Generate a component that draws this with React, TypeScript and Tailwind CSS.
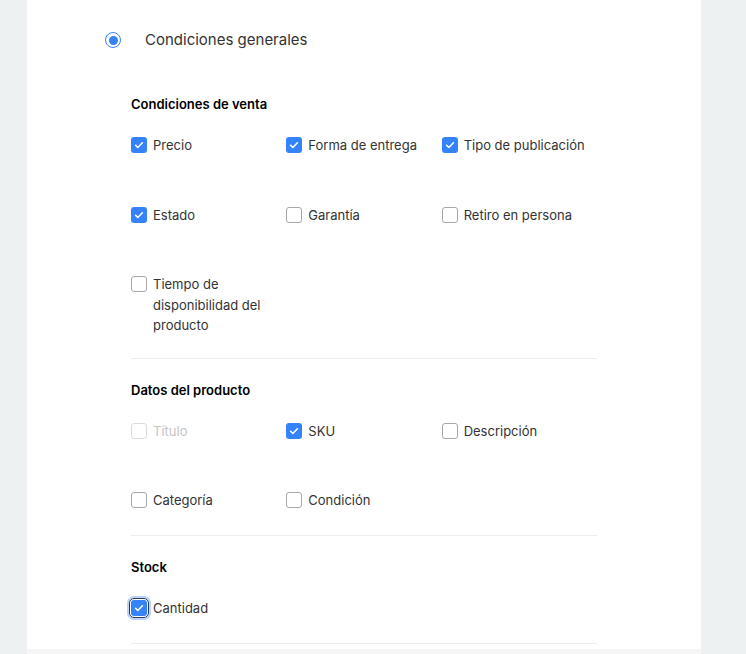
import React from "react";

type Item = { label: string; checked?: boolean; disabled?: boolean; focused?: boolean };
type Section = { title: string; sep: string; items: Item[] };

const sections: Section[] = [
  {
    title: "Condiciones de venta",
    sep: "mt-[22px] h-px bg-[#ececec]",
    items: [
      { label: "Precio", checked: true },
      { label: "Forma de entrega", checked: true },
      { label: "Tipo de publicación", checked: true },
      { label: "Estado", checked: true },
      { label: "Garantía" },
      { label: "Retiro en persona" },
      { label: "Tiempo de disponibilidad del producto" },
    ],
  },
  {
    title: "Datos del producto",
    sep: "mt-[24px] h-px bg-[#ececec]",
    items: [
      { label: "Título", disabled: true },
      { label: "SKU", checked: true },
      { label: "Descripción" },
      { label: "Categoría" },
      { label: "Condición" },
    ],
  },
  {
    title: "Stock",
    sep: "mt-[25px] h-px bg-[#ececec]",
    items: [{ label: "Cantidad", checked: true, focused: true }],
  },
];

function Box({ item }: { item: Item }) {
  const box = item.checked ? (
    <span className="flex h-4 w-4 items-center justify-center rounded-[3px] bg-[#3483fa]">
      <svg viewBox="0 0 16 16" className="h-4 w-4" fill="none">
        <path d="M4.6 8.3l2.2 2.2 4.6-4.7" stroke="#fff" strokeWidth="1.6" strokeLinecap="round" strokeLinejoin="round" />
      </svg>
    </span>
  ) : (
    <span
      className={
        item.disabled
          ? "block h-4 w-4 rounded-[3px] border border-[#dcdcdc] bg-white"
          : "block h-4 w-4 rounded-[3px] border border-[#a8a8a8] bg-white"
      }
    />
  );
  if (item.focused) {
    return (
      <span className="-mx-[2px] shrink-0 rounded-[5px] border border-[#2d3a55] p-px shadow-[0_0_0_2px_#b9d3fb]">
        {box}
      </span>
    );
  }
  return <span className="mt-[2px] shrink-0">{box}</span>;
}

export default function App() {
  return (
    <div className="min-h-screen bg-[#eef1f1] font-['Inter',sans-serif]">
      <div className="ml-[27px] w-[674px] bg-white pb-[5px]">
        <div className="flex h-[48px] items-end pl-[78px]">
          <div className="flex h-4 items-center">
            <span className="flex h-4 w-4 items-center justify-center rounded-full border-[1.5px] border-[#3483fa]">
              <span className="h-[9px] w-[9px] rounded-full bg-[#3483fa]" />
            </span>
            <span className="ml-6 text-[15px] leading-4 text-[#333]">Condiciones generales</span>
          </div>
        </div>

        <div className="ml-[104px] w-[466px] pt-[46px]">
          {sections.map((s, i) => (
            <div key={s.title} className={i > 0 ? "pt-[21px]" : ""}>
              <h3 className="text-[13px] font-semibold leading-5 text-black">{s.title}</h3>
              <div className="mt-[21px] grid grid-cols-3 gap-y-[49px]">
                {s.items.map((it) => (
                  <label key={it.label} className="flex items-start gap-[6px]">
                    <Box item={it} />
                    <span
                      className={
                        it.disabled
                          ? "max-w-[128px] text-[13px] leading-[20.5px] text-[#c4c4c4]"
                          : "max-w-[128px] text-[13px] leading-[20.5px] text-[#333]"
                      }
                    >
                      {it.label}
                    </span>
                  </label>
                ))}
              </div>
              <div className={s.sep} />
            </div>
          ))}
        </div>
      </div>
      <div className="ml-[27px] h-[6px] w-[674px] bg-[#f6f6f6]" />
    </div>
  );
}
